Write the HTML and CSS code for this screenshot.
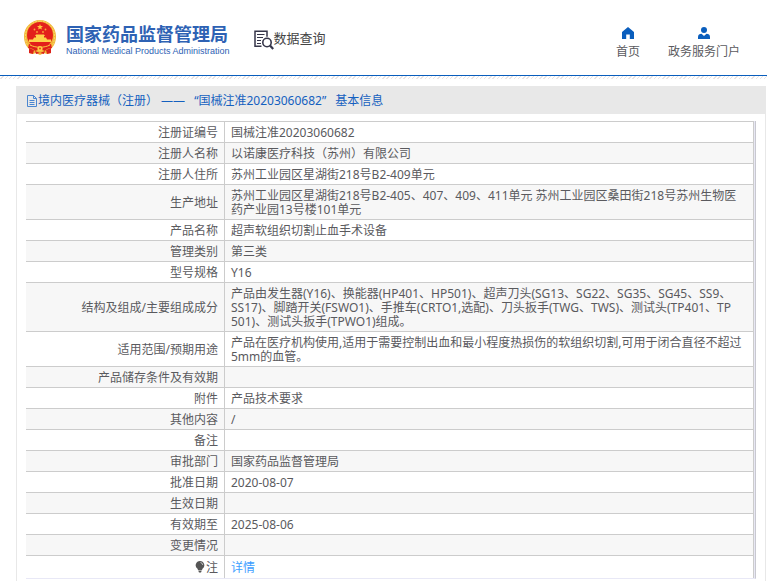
FILE: index.html
```html
<!DOCTYPE html>
<html lang="zh-CN">
<head>
<meta charset="utf-8">
<meta name="viewport" content="width=device-width, initial-scale=1">
<title>国家药品监督管理局 数据查询</title>
<link rel="stylesheet" href="styles.css">
</head>
<body>
<header class="top">
  <a class="brand" href="#">
    <svg class="emblem" viewBox="0 0 32 35" aria-hidden="true">
      <path d="M16 0C24.500 0 32 7 32 16c0 6-2 10-5 13v4l-4 1-3-1-4 2-4-2-3 1-4-1v-4C2 26 0 22 0 16 0 7 7.500 0 16 0Z" fill="#f2b73a"/>
      <path d="M16 1C8 1 1.500 8 1.500 16S4 26 6 28M16 1c8 0 14.500 7 14.500 15S28 26 26 28" fill="none" stroke="#f8d767" stroke-width="1" stroke-dasharray="2 1"/>
      <circle cx="16" cy="15" r="13" fill="#e3201b"/>
      <path d="m16 4 .8 2 2.200.1-1.700 1.400.6 2.100-1.900-1.200-1.900 1.200.6-2.100L13 6.100l2.200-.1Z" fill="#ffc83d"/>
      <g fill="#f9a83a"><circle cx="10.500" cy="9.500" r=".9"/><circle cx="21.500" cy="9.500" r=".9"/><circle cx="13" cy="12" r=".9"/><circle cx="19" cy="12" r=".9"/></g>
      <path d="M11 16l1-1.500h8l1 1.500h-1v1.500h2l1 2h4v2.500H5v-2.500h4l1-2h2V16Z" fill="#ffd24a"/>
      <path d="M5 24c6 2.500 16 2.500 22 0l1 4c-3 0-6 1-7 3l-5-2-5 2c-1-2-4-3-7-3Z" fill="#df211b"/>
      <path d="M6 25c6 3 14 3 20 0" fill="none" stroke="#ffc83d"/>
      <circle cx="16" cy="28.500" r="2.600" fill="#ffce45"/>
      <circle cx="16" cy="28.500" r="1" fill="#e3421b"/>
      <path d="M5 28l5 2-1 4-4-1ZM27 28l-5 2 1 4 4-1ZM11 31l5 2 5-2-1 3-4-1-4 1Z" fill="#dc211b"/>
    </svg>
    <span class="brand-text">
      <span class="brand-cn">国家药品监督管理局</span>
      <span class="brand-en">National Medical Products Administration</span>
    </span>
  </a>
  <a class="query" href="#">
    <svg class="query-icon" viewBox="0 0 20 20" aria-hidden="true">
      <g fill="none" stroke="#36364a">
        <path d="M7.500 16.200H1V1.200h12v5.600" stroke-width="1.500"/>
        <path d="M3 4.500h7.500M3 7.500h6M3 10.500h4M3 13.500h4" stroke-width="1.200"/>
        <circle cx="13" cy="12.500" r="4.200" stroke-width="1.600"/>
        <path d="m16 15.500 3.200 3.500" stroke-width="2.200"/>
      </g>
    </svg>
    <span>数据查询</span>
  </a>
  <nav class="nav">
    <a href="#">
      <svg viewBox="0 0 12 12" aria-hidden="true"><path d="M6 0 12 5v7H7.800V7.600H4.200V12H0V5Z" fill="#0a5ebd"/></svg>
      <span>首页</span>
    </a>
    <a href="#">
      <svg viewBox="0 0 12 12" aria-hidden="true"><circle cx="6" cy="3" r="3" fill="#0a5ebd"/><path d="M0 12V10c0-2 1.500-3.200 3.500-3.200L6 9l2.500-2.200c2 0 3.500 1.200 3.500 3.200v2Z" fill="#0a5ebd"/></svg>
      <span>政务服务门户</span>
    </a>
  </nav>
</header>
<div class="hatch"></div>
<main class="card">
  <h1 class="title">
    <svg viewBox="0 0 12 12" aria-hidden="true"><path d="M1.500.5h6l3 3v8h-9ZM7.500.5v3h3M3.500 5.500h5M3.500 7.500h5M3.500 9.500h5" fill="none" stroke="#4a86d0"/></svg>
    <span>境内医疗器械（注册） ——</span>
    <span>“国械注准20203060682”</span>
    <span>基本信息</span>
  </h1>
  <div class="sheet">
    <table class="info">
      <tbody>
        <tr><th scope="row">注册证编号</th><td>国械注准20203060682</td></tr>
        <tr><th scope="row">注册人名称</th><td>以诺康医疗科技（苏州）有限公司</td></tr>
        <tr><th scope="row">注册人住所</th><td>苏州工业园区星湖街218号B2-409单元</td></tr>
        <tr><th scope="row">生产地址</th><td>苏州工业园区星湖街218号B2-405、407、409、411单元 苏州工业园区桑田街218号苏州生物医<br>药产业园13号楼101单元</td></tr>
        <tr><th scope="row">产品名称</th><td>超声软组织切割止血手术设备</td></tr>
        <tr><th scope="row">管理类别</th><td>第三类</td></tr>
        <tr><th scope="row">型号规格</th><td>Y16</td></tr>
        <tr><th scope="row">结构及组成/主要组成成分</th><td>产品由发生器(Y16)、换能器(HP401、HP501)、超声刀头(SG13、SG22、SG35、SG45、SS9、<br>SS17)、脚踏开关(FSWO1)、手推车(CRTO1,选配)、刀头扳手(TWG、TWS)、测试头(TP401、TP<br>501)、测试头扳手(TPWO1)组成。</td></tr>
        <tr><th scope="row">适用范围/预期用途</th><td>产品在医疗机构使用,适用于需要控制出血和最小程度热损伤的软组织切割,可用于闭合直径不超过<br>5mm的血管。</td></tr>
        <tr><th scope="row">产品储存条件及有效期</th><td></td></tr>
        <tr><th scope="row">附件</th><td>产品技术要求</td></tr>
        <tr><th scope="row">其他内容</th><td>/</td></tr>
        <tr><th scope="row">备注</th><td></td></tr>
        <tr><th scope="row">审批部门</th><td>国家药品监督管理局</td></tr>
        <tr><th scope="row">批准日期</th><td>2020-08-07</td></tr>
        <tr><th scope="row">生效日期</th><td></td></tr>
        <tr><th scope="row">有效期至</th><td>2025-08-06</td></tr>
        <tr><th scope="row">变更情况</th><td></td></tr>
        <tr class="note"><th scope="row"><svg class="bulb" viewBox="0 0 10 12" aria-hidden="true"><path d="M5 0a4.300 4.300 0 0 1 2.500 7.800L7 9H3l-.5-1.200A4.300 4.300 0 0 1 5 0ZM3.200 9.500h3.600L6 11.500H4Z" fill="#555"/><path d="M5.500 1.500q2 .3 2.300 2.500" fill="none" stroke="#ddd" stroke-width=".8"/></svg>注</th><td><a href="#">详情</a></td></tr>
      </tbody>
    </table>
  </div>
</main>
</body>
</html>
```
FILE: styles.css
```css
* {
  box-sizing: border-box;
}

body {
  display: flex;
  flex-direction: column;
  min-height: 100vh;
  margin: 0;
  background: #fff;
  color: #5a5a5e;
  font: 12px/14px "Noto Sans", "Noto Sans CJK SC", sans-serif;
}

a {
  color: inherit;
  text-decoration: none;
}

svg {
  display: block;
  flex: none;
}

.top {
  display: flex;
  align-items: flex-start;
  height: 76px;
  padding: 20px 27px 0 24px;
  border-bottom: 1px solid #0a5ebd;
}

.brand {
  display: flex;
  gap: 10px;
  color: #2e62b4;
}

.emblem {
  width: 32px;
  height: 35px;
}

.brand-text {
  display: flex;
  flex-direction: column;
  padding-top: 4px;
  white-space: nowrap;
}

.brand-cn {
  font-size: 18px;
  font-weight: 700;
  line-height: 20px;
}

.brand-en {
  font: 9px/14px "Liberation Sans", sans-serif;
}

.query {
  display: flex;
  align-items: center;
  margin: 10px 0 0 24px;
  color: #444;
  font-size: 13px;
  line-height: 16px;
  white-space: nowrap;
}

.query span {
  padding-bottom: 4px;
}

.query-icon {
  width: 20px;
  height: 20px;
}

.nav {
  display: flex;
  gap: 28px;
  margin-left: auto;
  padding-top: 7px;
}

.nav a {
  display: flex;
  flex-direction: column;
  align-items: center;
  gap: 6px;
  white-space: nowrap;
}

.nav svg {
  width: 12px;
  height: 12px;
}

.hatch {
  height: 3px;
  background: repeating-linear-gradient(135deg, #fff 0 2px, #e9e4e4 2px 3px);
}

.card {
  flex: 1;
  margin: 7px 1px 0 16px;
  border: solid #e8e8e8;
  border-width: 0 1px;
}

.title {
  display: flex;
  align-items: center;
  gap: 9px;
  height: 28px;
  margin: 0;
  padding: 2px 9px 0;
  background: #e8e8e8;
  color: #1460bf;
  font-size: 12px;
  font-weight: 400;
  white-space: nowrap;
}

.title svg {
  width: 12px;
  height: 12px;
  margin-right: -9px;
}

.sheet {
  margin: 7px 9px 0;
  padding-right: 1px;
  border-right: 1px solid #c8c8d0;
  border-bottom: 1px solid #e8e8f6;
  background: #e8e8f4;
}

.info {
  width: 100%;
  border-spacing: 0;
  background: #fff;
}

.info th,
.info td {
  height: 21px;
  padding: 4px 6px 2px;
  border: solid #ccc;
  border-width: 1px 1px 0 0;
  vertical-align: middle;
}

.info th {
  width: 199px;
  font-weight: 400;
  text-align: right;
}

.info tr:nth-child(even) {
  background: #f7f7f7;
}

.info .note th,
.info .note td {
  height: 23px;
  line-height: 16px;
}

.info .note a {
  color: #409eff;
}

.bulb {
  display: inline-block;
  width: 10px;
  height: 12px;
  margin-right: 1px;
  vertical-align: -1px;
}
```
